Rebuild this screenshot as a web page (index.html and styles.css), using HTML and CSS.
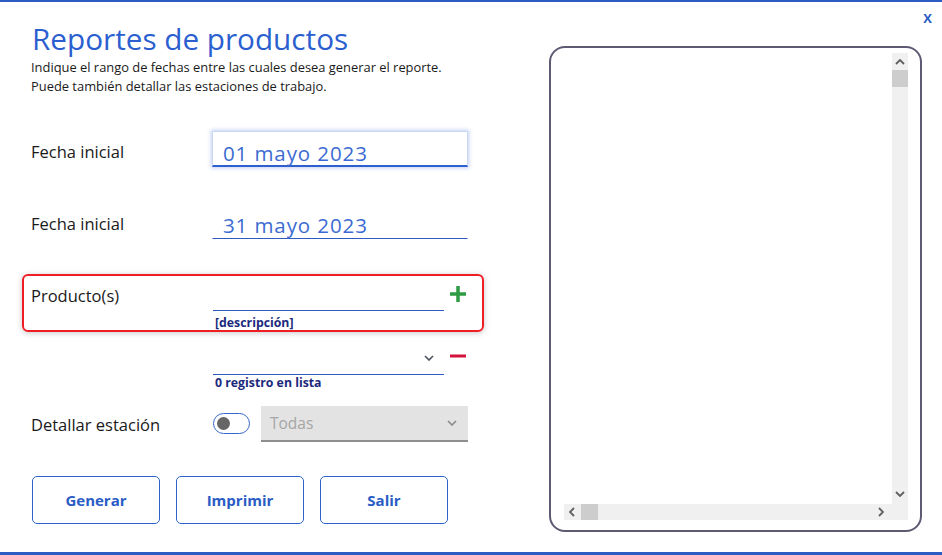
FILE: index.html
```html
<!DOCTYPE html>
<html lang="es">
<head>
<meta charset="utf-8">
<title>Reportes de productos</title>
<link rel="stylesheet" href="styles.css">
</head>
<body>
<div class="window">
  <button class="close">X</button>
  <div class="left">
    <h1 class="title">Reportes de productos</h1>
    <p class="subtitle">Indique el rango de fechas entre las cuales desea generar el reporte.<br>Puede también detallar las estaciones de trabajo.</p>

    <div class="row row-date">
      <div class="label">Fecha inicial</div>
      <div class="date-input focused">01 mayo 2023</div>
    </div>
    <div class="row row-date row-gap">
      <div class="label">Fecha inicial</div>
      <div class="date-input">31 mayo 2023</div>
    </div>

    <div class="product-box">
      <div class="label">Producto(s)</div>
      <div class="field">
        <div class="line-input"></div>
        <div class="hint">[descripción]</div>
      </div>
      <div class="icon-cell">
        <svg class="plus" width="16" height="16" viewBox="0 0 16 16"><rect x="6.25" y="0" width="3.5" height="16" fill="#2e9b43"/><rect x="0" y="6.25" width="16" height="3.5" fill="#2e9b43"/></svg>
      </div>
    </div>

    <div class="row row-list">
      <div class="label"></div>
      <div class="field">
        <div class="line-input dropdown">
          <svg width="10" height="6" viewBox="0 0 10 6"><polyline points="1,1 5,5 9,1" fill="none" stroke="#4a5060" stroke-width="1.6"/></svg>
        </div>
        <div class="hint hint-tight">0 registro en lista</div>
      </div>
      <div class="icon-cell">
        <svg class="minus" width="16" height="4" viewBox="0 0 16 4"><rect x="0" y="0.5" width="16" height="3" fill="#d3123b"/></svg>
      </div>
    </div>

    <div class="row row-station">
      <div class="label">Detallar estación</div>
      <div class="toggle"><span class="knob"></span></div>
      <div class="select">
        <span>Todas</span>
        <svg width="10" height="6" viewBox="0 0 10 6"><polyline points="1,1 5,5 9,1" fill="none" stroke="#8a8a8a" stroke-width="1.6"/></svg>
      </div>
    </div>

    <div class="buttons">
      <button class="btn">Generar</button>
      <button class="btn">Imprimir</button>
      <button class="btn">Salir</button>
    </div>
  </div>

  <div class="preview">
    <div class="scrollbox">
      <div class="content"></div>
      <div class="vscroll">
        <svg class="arrow" width="10" height="6" viewBox="0 0 10 6"><polyline points="1,5 5,1 9,5" fill="none" stroke="#606060" stroke-width="1.8"/></svg>
        <div class="vthumb"></div>
        <div class="vspace"></div>
        <svg class="arrow" width="10" height="6" viewBox="0 0 10 6"><polyline points="1,1 5,5 9,1" fill="none" stroke="#606060" stroke-width="1.8"/></svg>
      </div>
      <div class="hscroll">
        <svg class="arrow" width="6" height="10" viewBox="0 0 6 10"><polyline points="5,1 1,5 5,9" fill="none" stroke="#606060" stroke-width="1.8"/></svg>
        <div class="hthumb"></div>
        <div class="hspace"></div>
        <svg class="arrow" width="6" height="10" viewBox="0 0 6 10"><polyline points="1,1 5,5 1,9" fill="none" stroke="#606060" stroke-width="1.8"/></svg>
      </div>
      <div class="corner"></div>
    </div>
  </div>
</div>
</body>
</html>
```

FILE: styles.css
```css
* { box-sizing: border-box; }

html, body {
  margin: 0;
  padding: 0;
  background: #ffffff;
}

body {
  font-family: "Open Sans", "Noto Sans", "Liberation Sans", sans-serif;
  color: #1a1a1a;
}

.window {
  position: relative;
  width: 942px;
  height: 555px;
  border-top: 2px solid #2b5cc3;
  border-bottom: 3px solid #2b5cc3;
  display: flex;
  align-items: flex-start;
  background: #fff;
}

.close {
  position: absolute;
  top: 8px;
  right: 10px;
  border: none;
  background: none;
  padding: 0;
  font-family: "Open Sans", "Liberation Sans", sans-serif;
  font-weight: 700;
  font-size: 13px;
  line-height: 16px;
  color: #2b5cc3;
}

.left {
  width: 549px;
  padding-left: 22px;
}

.title {
  margin: 19px 0 0 10px;
  font-size: 29.7px;
  line-height: 36px;
  font-weight: 400;
  color: #2b5fd0;
}

.subtitle {
  margin: 1px 0 0 9px;
  font-size: 12.9px;
  line-height: 19px;
  color: #1a1a1a;
}

.row {
  display: flex;
  align-items: flex-start;
  padding-left: 9px;
}

.label {
  width: 182px;
  flex: none;
  font-size: 16.5px;
  line-height: 26px;
  margin-top: 8px;
  color: #1a1a1a;
}

.row-date {
  margin-top: 35px;
  height: 36px;
}

.row-gap {
  margin-top: 36px;
}

.date-input {
  width: 256px;
  height: 36px;
  margin-left: -1px;
  padding: 9px 0 0 10px;
  border: 1px solid transparent;
  border-bottom: 1px solid #2d5bbf;
  font-size: 20.5px;
  line-height: 24px;
  letter-spacing: 0.9px;
  color: #3b6bd2;
}

.date-input.focused {
  border: 1px solid #c9d6f2;
  border-bottom: 2px solid #2d5fcf;
  box-shadow: 0 0 4px 1px rgba(120, 150, 230, 0.45);
}

.product-box {
  display: flex;
  align-items: flex-start;
  margin-top: 35px;
  width: 462px;
  height: 58px;
  border: 2px solid #ef1d24;
  border-radius: 6px;
  padding-left: 7px;
  box-shadow: 0 1px 6px rgba(0, 0, 0, 0.22);
}

.product-box .label {
  margin-top: 7px;
}

.field {
  width: 231px;
  flex: none;
}

.product-box .field {
  margin-top: 5px;
}

.line-input {
  height: 30px;
  border-bottom: 1px solid #2d5bbf;
}

.hint {
  margin-top: 4px;
  padding-left: 2px;
  font-size: 12.3px;
  line-height: 15px;
  font-weight: 700;
  color: #1c2a7d;
}

.hint-tight {
  margin-top: 0;
}

.icon-cell {
  padding-left: 6px;
}

.product-box .icon-cell {
  margin-top: 10px;
}

.plus { display: block; }

.row-list {
  margin-top: 14px;
}

.dropdown {
  height: 29px;
  display: flex;
  justify-content: flex-end;
  align-items: flex-start;
  padding: 9px 10px 0 0;
}

.dropdown svg { display: block; }

.row-list .icon-cell {
  margin-top: 8px;
}

.minus { display: block; }

.row-station {
  margin-top: 16px;
  height: 36px;
}

.row-station .label {
  margin-top: 6px;
}

.toggle {
  flex: none;
  width: 37px;
  height: 21px;
  margin-top: 7px;
  border: 1.5px solid #3467cf;
  border-radius: 11px;
  padding: 2.5px 0 0 3px;
}

.knob {
  display: block;
  width: 13px;
  height: 13px;
  border-radius: 50%;
  background: #666666;
}

.select {
  flex: none;
  width: 207px;
  height: 36px;
  margin-left: 11px;
  background: #e3e3e3;
  border-bottom: 2px solid #8e8e8e;
  display: flex;
  align-items: center;
  justify-content: space-between;
  padding: 0 11px 0 9px;
  font-size: 15.5px;
  color: #a6a6a6;
}

.select span { line-height: 22px; }

.buttons {
  display: flex;
  gap: 16px;
  margin-top: 34px;
  padding-left: 10px;
}

.btn {
  width: 128px;
  height: 48px;
  border: 1px solid #2f62c8;
  border-radius: 5px;
  background: #fff;
  font-family: "Open Sans", "Liberation Sans", sans-serif;
  font-weight: 700;
  font-size: 15px;
  color: #2a5cc6;
  padding: 0;
}

.preview {
  margin-top: 44px;
  width: 373px;
  height: 486px;
  border: 2px solid #5d5b73;
  border-radius: 16px;
  padding: 5px 12px 10px 13px;
}

.scrollbox {
  width: 100%;
  height: 100%;
  display: grid;
  grid-template-columns: 1fr 16px;
  grid-template-rows: 1fr 16px;
}

.content { background: #fff; }

.vscroll {
  background: #f0f0f0;
  display: flex;
  flex-direction: column;
  align-items: center;
}

.vscroll .arrow:first-child { margin-top: 6px; }
.vscroll .arrow:last-child { margin-bottom: 7px; }

.vthumb {
  width: 100%;
  height: 17px;
  margin-top: 5px;
  background: #cdcdcd;
}

.vspace { flex: 1; }

.hscroll {
  background: #f0f0f0;
  display: flex;
  align-items: center;
}

.hscroll .arrow:first-child { margin-left: 5px; }
.hscroll .arrow:last-child { margin-right: 8px; }

.hthumb {
  width: 17px;
  height: 100%;
  margin-left: 6px;
  background: #cdcdcd;
}

.hspace { flex: 1; }

.corner { background: #f0f0f0; }

.arrow { display: block; flex: none; }
```
